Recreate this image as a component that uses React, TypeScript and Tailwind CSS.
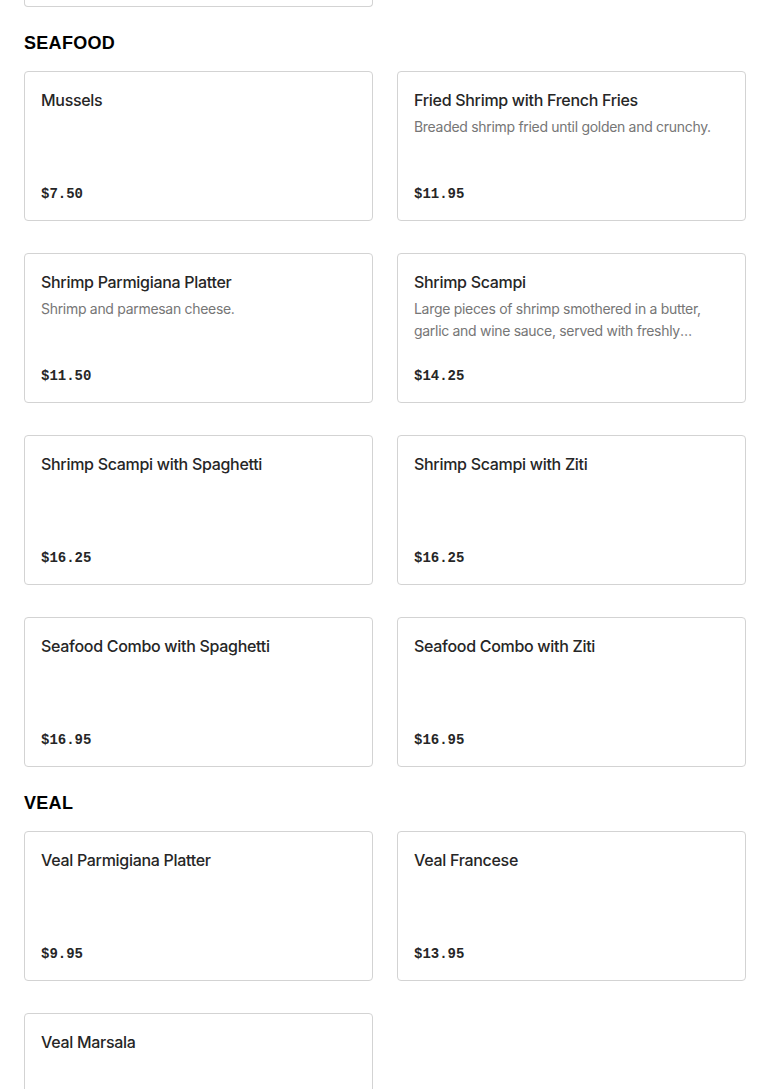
interface MenuItem {
  name: string;
  description?: string;
  price: string;
}

interface Section {
  title: string;
  items: MenuItem[];
}

const sections: Section[] = [
  {
    title: "SEAFOOD",
    items: [
      { name: "Mussels", price: "$7.50" },
      {
        name: "Fried Shrimp with French Fries",
        description: "Breaded shrimp fried until golden and crunchy.",
        price: "$11.95",
      },
      {
        name: "Shrimp Parmigiana Platter",
        description: "Shrimp and parmesan cheese.",
        price: "$11.50",
      },
      {
        name: "Shrimp Scampi",
        description:
          "Large pieces of shrimp smothered in a butter, garlic and wine sauce, served with freshly prepared linguine.",
        price: "$14.25",
      },
      { name: "Shrimp Scampi with Spaghetti", price: "$16.25" },
      { name: "Shrimp Scampi with Ziti", price: "$16.25" },
      { name: "Seafood Combo with Spaghetti", price: "$16.95" },
      { name: "Seafood Combo with Ziti", price: "$16.95" },
    ],
  },
  {
    title: "VEAL",
    items: [
      { name: "Veal Parmigiana Platter", price: "$9.95" },
      { name: "Veal Francese", price: "$13.95" },
      { name: "Veal Marsala", price: "$14.95" },
    ],
  },
];

function MenuCard({ name, description, price }: MenuItem) {
  return (
    <div className="flex h-[150px] flex-col justify-between rounded border border-[#d3d3d3] bg-white px-4 pt-4 pb-[14px]">
      <div>
        <h3 className="text-base font-medium leading-6 tracking-[-0.3px] text-[#262626]">{name}</h3>
        {description && (
          <p className="mt-1 line-clamp-2 text-sm leading-[22px] tracking-[-0.3px] text-[#767676]">
            {description}
          </p>
        )}
      </div>
      <span className="font-['Liberation_Mono',monospace] text-sm font-bold leading-6 text-[#262626]">
        {price}
      </span>
    </div>
  );
}

export default function App() {
  return (
    <div className="min-h-screen bg-white px-6 font-['Inter',sans-serif]">
      {/* tail of the previous section */}
      <div className="grid grid-cols-2 gap-x-6">
        <div className="h-[7px] rounded-b border-x border-b border-[#d3d3d3]" />
      </div>

      {sections.map((section) => (
        <section key={section.title}>
          <h2 className="mt-6 mb-4 font-['Liberation_Sans',Arial,sans-serif] text-lg font-extrabold leading-6 tracking-[0.3px] text-black">
            {section.title}
          </h2>
          <div className="grid grid-cols-2 gap-x-6 gap-y-8">
            {section.items.map((item) => (
              <MenuCard key={item.name} {...item} />
            ))}
          </div>
        </section>
      ))}
    </div>
  );
}
